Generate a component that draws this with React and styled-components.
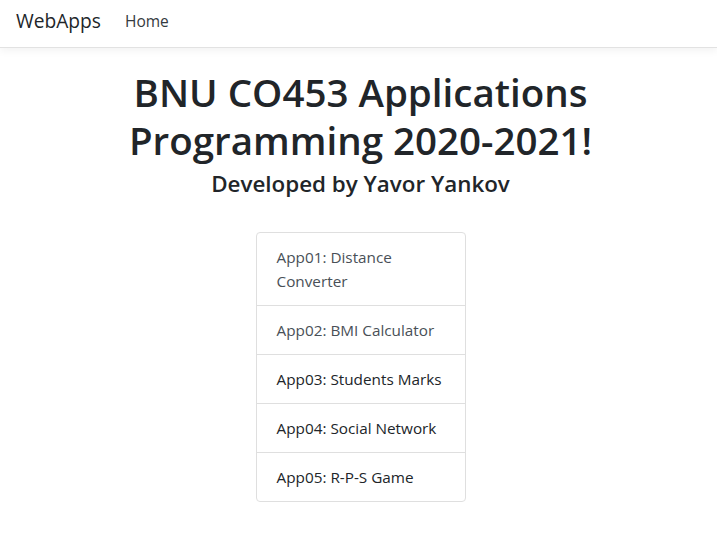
import React from 'react';
import styled, { createGlobalStyle } from 'styled-components';

const GlobalStyle = createGlobalStyle`
  body {
    margin: 0;
    font-family: "Open Sans", "Noto Sans", sans-serif;
    color: #212529;
    background: #fff;
  }
`;

const Navbar = styled.nav`
  display: flex;
  align-items: flex-start;
  height: 48px;
  box-sizing: border-box;
  padding: 6px 16px 0;
  background: #fff;
  border-bottom: 1px solid #e2e2e2;
  box-shadow: 0 3px 8px rgba(0, 0, 0, 0.05);
`;

const Brand = styled.a`
  font-size: 19.2px;
  line-height: 30px;
  color: #212529;
  margin-right: 24px;
  text-decoration: none;
`;

const NavLink = styled.a`
  font-size: 15.5px;
  line-height: 30px;
  color: #343a40;
  text-decoration: none;
`;

const Main = styled.main`
  display: flex;
  flex-direction: column;
  align-items: center;
  padding: 20px 0 0 4px;
`;

const Title = styled.h1`
  margin: 0;
  font-size: 38.5px;
  font-weight: 600;
  line-height: 48px;
  text-align: center;
  width: 500px;
`;

const Subtitle = styled.h3`
  margin: 4px 0 32px;
  font-size: 22.4px;
  font-weight: 600;
  line-height: 32px;
  text-align: center;
`;

const List = styled.div`
  box-sizing: border-box;
  width: 210px;
  border: 1px solid #dfdfdf;
  border-radius: 4px;
  display: flex;
  flex-direction: column;
`;

const Item = styled.a`
  padding: 12px 20px;
  font-size: 15.3px;
  line-height: 24px;
  color: ${({ $muted }) => ($muted ? '#495057' : '#212529')};
  text-decoration: none;
  & + & {
    border-top: 1px solid #dfdfdf;
  }
`;

const apps = [
  { name: 'App01: Distance Converter', muted: true },
  { name: 'App02: BMI Calculator', muted: true },
  { name: 'App03: Students Marks' },
  { name: 'App04: Social Network' },
  { name: 'App05: R-P-S Game' },
];

export default function App() {
  return (
    <>
      <GlobalStyle />
      <Navbar>
        <Brand href="#">WebApps</Brand>
        <NavLink href="#">Home</NavLink>
      </Navbar>
      <Main>
        <Title>BNU CO453 Applications Programming 2020-2021!</Title>
        <Subtitle>Developed by Yavor Yankov</Subtitle>
        <List>
          {apps.map((a) => (
            <Item key={a.name} href="#" $muted={a.muted}>
              {a.name}
            </Item>
          ))}
        </List>
      </Main>
    </>
  );
}
